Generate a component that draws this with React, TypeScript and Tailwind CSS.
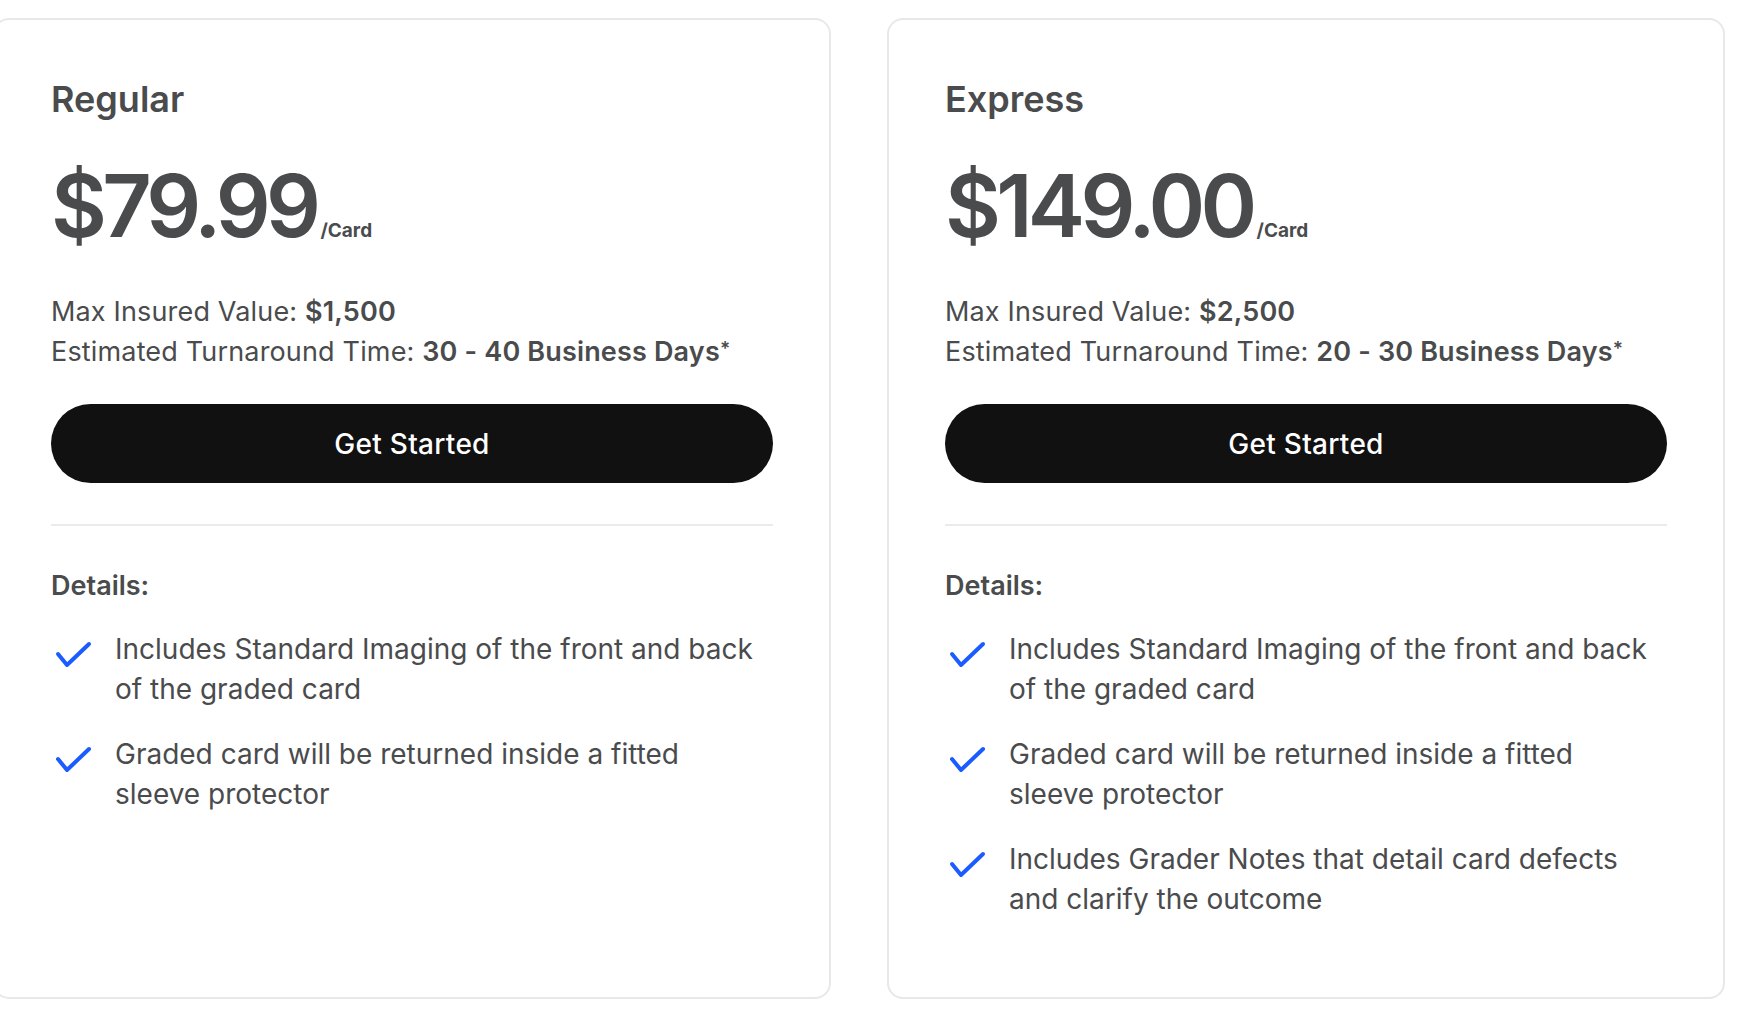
import { Fragment } from 'react';

interface Plan {
  name: string;
  price: string;
  insured: string;
  turnaround: string;
  details: string[];
}

const plans: Plan[] = [
  {
    name: 'Regular',
    price: '$79.99',
    insured: '$1,500',
    turnaround: '30 - 40 Business Days',
    details: [
      'Includes Standard Imaging of the front and back of the graded card',
      'Graded card will be returned inside a fitted sleeve protector',
    ],
  },
  {
    name: 'Express',
    price: '$149.00',
    insured: '$2,500',
    turnaround: '20 - 30 Business Days',
    details: [
      'Includes Standard Imaging of the front and back of the graded card',
      'Graded card will be returned inside a fitted sleeve protector',
      'Includes Grader Notes that detail card defects and clarify the outcome',
    ],
  },
];

function Check() {
  return (
    <svg width="40" height="40" viewBox="0 0 40 40" fill="none" className="shrink-0 ml-[2px] mt-[2px]">
      <path
        d="M5 23L14 34L36 13"
        stroke="#1a5cff"
        strokeWidth="4"
        strokeLinecap="round"
        strokeLinejoin="round"
      />
    </svg>
  );
}

function PlanCard({ plan }: { plan: Plan }) {
  return (
    <div className="w-[838px] h-[981px] shrink-0 rounded-[16px] border-2 border-[#e8e8e8] bg-white px-[56px] pt-[57px]">
      <h2 className="text-[36px] leading-[44px] font-semibold text-[#4a4b4d]">{plan.name}</h2>

      <div className="mt-[42px] flex items-baseline">
        <span className="text-[86px] leading-[86px] font-semibold tracking-[-0.055em] text-[#4a4b4d]">
          {plan.price}
        </span>
        <span className="ml-[4px] text-[19px] font-bold text-[#4a4b4d]">/Card</span>
      </div>

      <div className="mt-[43px] text-[27px] leading-[40px] tracking-[0.006em] text-[#4a4b4d]">
        <p>
          Max Insured Value: <span className="font-semibold">{plan.insured}</span>
        </p>
        <p>
          Estimated Turnaround Time: <span className="font-semibold">{plan.turnaround}</span>
          <span className="align-top text-[19px] font-semibold leading-[34px]">*</span>
        </p>
      </div>

      <button className="mt-[32px] w-full h-[79px] rounded-full bg-[#111111] text-white text-[28px] font-medium tracking-[0.01em]">
        Get Started
      </button>

      <div className="mt-[41px] h-[2px] bg-[#ebebeb]" />

      <p className="mt-[40px] text-[27px] leading-[40px] font-semibold text-[#4a4b4d]">Details:</p>

      <ul className="mt-[23px] flex flex-col gap-[25px]">
        {plan.details.map((d, i) => (
          <Fragment key={i}>
            <li className="flex items-start gap-[22px] pr-[10px]">
              <Check />
              <span className="text-[28px] leading-[40px] text-[#4a4b4d]">{d}</span>
            </li>
          </Fragment>
        ))}
      </ul>
    </div>
  );
}

export default function App() {
  return (
    <div
      className="min-h-screen w-full overflow-hidden bg-white"
      style={{ fontFamily: 'Inter, "Noto Sans", sans-serif' }}
    >
      <div className="ml-[-7px] flex gap-[56px] pt-[18px]">
        {plans.map(p => (
          <PlanCard key={p.name} plan={p} />
        ))}
      </div>
    </div>
  );
}
